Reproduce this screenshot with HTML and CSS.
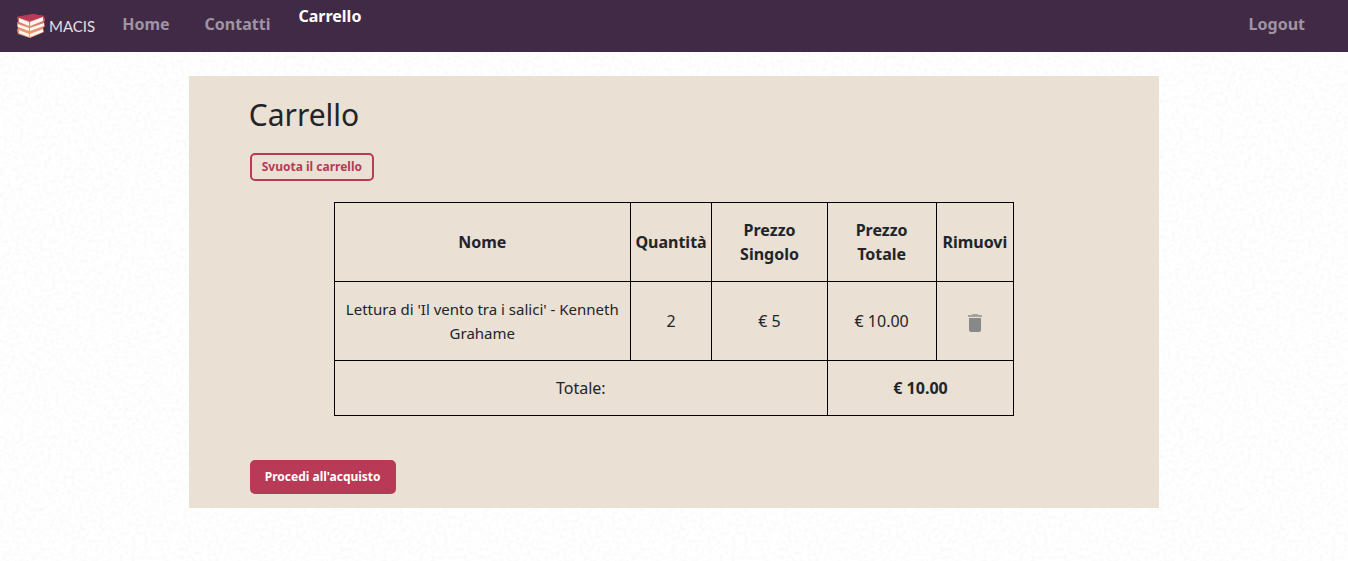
FILE: index.html
```html
<!DOCTYPE html>
<html lang="it">
<head>
<meta charset="utf-8">
<title>Carrello - MACIS</title>
<link rel="stylesheet" href="styles.css">
</head>
<body>
<nav class="navbar">
  <a class="brand" href="#" aria-label="MACIS">
    <svg class="brand-mark" viewBox="0 0 30 26" aria-hidden="true">
      <defs>
        <linearGradient id="cover" x1="0" y1="0" x2="0" y2="1">
          <stop offset="0" stop-color="#b83a56"/>
          <stop offset="0.5" stop-color="#e08a74"/>
          <stop offset="1" stop-color="#f5a36c"/>
        </linearGradient>
      </defs>
      <path fill="url(#cover)" d="M1 4L17 1L28 3L29 7L28 9L29 13L27 15L28 19L14 25L2 21L1 17L2 15L1 13L1 10L2 8Z"/>
      <path fill="#fff6ef" d="M3 5L13 9V13L3 9ZM14 9L27 4V8L14 13ZM2 11L13 15V18L2 14ZM14 15L28 10V13L14 18ZM3 17L13 21V24L3 20ZM14 21L27 16V19L14 24Z"/>
      <path fill="#b83a56" d="M1 4L17 1L28 3L14 8Z"/>
    </svg>
    <span>MACIS</span>
  </a>
  <a class="nav-link nav-home" href="#">Home</a>
  <a class="nav-link" href="#">Contatti</a>
  <a class="nav-link active" href="#" aria-current="page">Carrello</a>
  <a class="nav-link logout" href="#">Logout</a>
</nav>
<main class="cart">
  <h1>Carrello</h1>
  <button class="btn btn-outline" type="button">Svuota il carrello</button>
  <table class="cart-table">
    <colgroup><col class="col-name"><col class="col-qty"><col class="col-price"><col class="col-total"><col class="col-remove"></colgroup>
    <thead>
      <tr><th>Nome</th><th>Quantità</th><th>Prezzo Singolo</th><th>Prezzo Totale</th><th>Rimuovi</th></tr>
    </thead>
    <tbody>
      <tr>
        <td class="product">Lettura di 'Il vento tra i salici' - Kenneth Grahame</td>
        <td>2</td>
        <td>€ 5</td>
        <td>€ 10.00</td>
        <td><button class="remove" type="button" aria-label="Rimuovi"><svg viewBox="0 0 14 18" aria-hidden="true"><path opacity="0.7" d="M0 1H3.500L4.500 0H9.500L10.500 1H14V3H0Z"/><path d="M1 4H13V16Q13 18 11 18H3Q1 18 1 16Z"/></svg></button></td>
      </tr>
      <tr><td colspan="3">Totale:</td><td colspan="2"><strong>€ 10.00</strong></td></tr>
    </tbody>
  </table>
  <button class="btn btn-primary" type="button">Procedi all'acquisto</button>
</main>
</body>
</html>
```
FILE: styles.css
```css
* {
  box-sizing: border-box;
}

body {
  margin: 0;
  color: #212529;
  font: 16px/24px Tahoma, "Noto Sans", sans-serif;
  background: #fff url("data:image/svg+xml,%3Csvg xmlns='http://www.w3.org/2000/svg' width='300' height='300'%3E%3Cfilter id='n'%3E%3CfeTurbulence type='fractalNoise' baseFrequency='0.25' numOctaves='2' stitchTiles='stitch'/%3E%3CfeColorMatrix values='0 0 0 0 0.4 0 0 0 0 0.4 0 0 0 0 0.4 0.16 0 0 0 -0.065'/%3E%3C/filter%3E%3Crect width='300' height='300' filter='url(%23n)'/%3E%3C/svg%3E");
}

.navbar {
  display: flex;
  align-items: flex-start;
  height: 52px;
  padding: 4px 43px 0 16px;
  background: #412a45;
}

.brand {
  display: flex;
  align-items: center;
  gap: 3px;
  padding-top: 9px;
  color: #e4dfe5;
  font: 15px/26px Lato, sans-serif;
  text-decoration: none;
}

.brand-mark {
  width: 30px;
  height: 26px;
}

.nav-link {
  margin-right: 28px;
  padding-top: 8px;
  color: #a094a2;
  font-weight: 700;
  text-decoration: none;
}

.nav-home {
  margin-left: 27px;
  margin-right: 35px;
}

.nav-link.active {
  padding-top: 0;
  color: #fff;
}

.nav-link.logout {
  margin-left: auto;
  margin-right: 0;
}

.cart {
  width: 72%;
  margin: 24px auto;
  padding: 20px 60px 14px;
  background: #eae0d3;
}

h1 {
  margin: 0 0 19px;
  font-size: 30px;
  font-weight: 400;
  line-height: 38px;
}

.btn {
  display: block;
  margin-left: 1px;
  border: 2px solid #b83a56;
  border-radius: 5px;
  font-family: inherit;
  font-size: 12px;
  font-weight: 700;
}

.btn-outline {
  padding: 3px 10px;
  color: #b83a56;
  background: transparent;
  line-height: 18px;
}

.btn-primary {
  padding: 6px 13px;
  color: #fff;
  background: #b83a56;
  line-height: 18px;
}

.cart-table {
  width: 80%;
  margin: 21px auto 44px;
  border-collapse: collapse;
  table-layout: fixed;
  text-align: center;
}

.cart-table th,
.cart-table td {
  padding: 15px 4px;
  border: 1px solid #000;
}

.cart-table .product {
  font-size: 15px;
}

.col-name { width: 296px; }
.col-qty { width: 12%; }
.col-price { width: 17%; }
.col-total { width: 16%; }

.remove {
  padding: 0;
  border: 0;
  background: none;
  vertical-align: middle;
}

.remove svg {
  display: block;
  width: 14px;
  height: 18px;
  fill: #888;
}
```
